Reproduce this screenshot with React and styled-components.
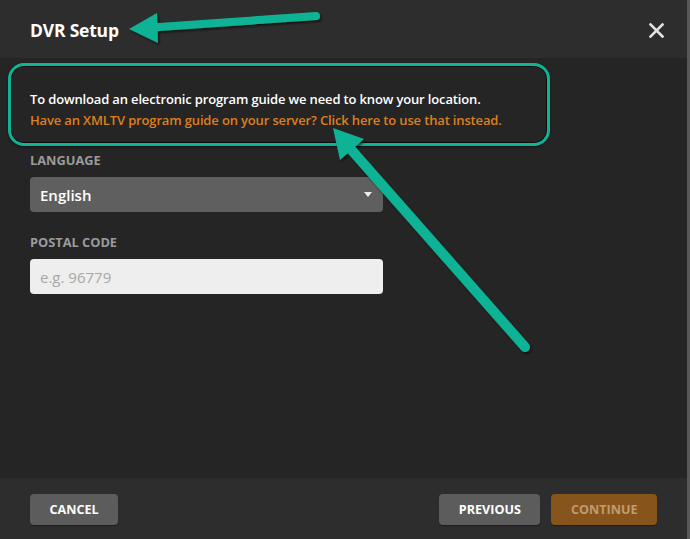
import React from "react";
import styled, { createGlobalStyle } from "styled-components";

const Global = createGlobalStyle`
  html, body {
    margin: 0;
    padding: 0;
    background: #252525;
  }
  body {
    font-family: "Open Sans", "Liberation Sans", sans-serif;
  }
  * { box-sizing: border-box; }
`;

export default function App() {
  return (
    <>
      <Global />
      <Page>
        <Modal>
          <Header>
            <Title>DVR Setup</Title>
            <CloseButton aria-label="close">
              <svg width="15" height="15" viewBox="0 0 15 15">
                <path d="M1.5 1.5 L13.5 13.5 M13.5 1.5 L1.5 13.5" stroke="#e2e2e2" strokeWidth="2.6" strokeLinecap="square" />
              </svg>
            </CloseButton>
          </Header>

          <Body>
            <Intro>
              <p>To download an electronic program guide we need to know your location.</p>
              <a>Have an XMLTV program guide on your server? Click here to use that instead.</a>
            </Intro>

            <Field>
              <Label>Language</Label>
              <Select>
                <span>English</span>
                <Caret />
              </Select>
            </Field>

            <Field>
              <Label>Postal Code</Label>
              <Input placeholder="e.g. 96779" />
            </Field>
          </Body>

          <Footer>
            <Button>Cancel</Button>
            <FooterRight>
              <Button>Previous</Button>
              <Button $primary>Continue</Button>
            </FooterRight>
          </Footer>

          <Highlight />
          <Arrows width="690" height="539" viewBox="0 0 690 539">
            <defs>
              <filter id="sh" x="-10%" y="-10%" width="130%" height="130%">
                <feDropShadow dx="1.5" dy="2" stdDeviation="1.2" floodColor="#000" floodOpacity="0.55" />
              </filter>
            </defs>
            <g filter="url(#sh)" fill="#10b394" stroke="#10b394">
              <line x1="152" y1="27.5" x2="316" y2="16" strokeWidth="8" strokeLinecap="round" />
              <polygon points="129,29 157,13 158,43" stroke="none" />
              <line x1="348" y1="146" x2="525" y2="347" strokeWidth="10" strokeLinecap="round" />
              <polygon points="333,128 340,160 364,139" stroke="none" />
            </g>
          </Arrows>
        </Modal>
        <Strip />
      </Page>
    </>
  );
}

const Page = styled.div`
  display: flex;
  width: 690px;
  height: 539px;
  overflow: hidden;
`;

const Modal = styled.div`
  position: relative;
  width: 687px;
  height: 539px;
  display: flex;
  flex-direction: column;
  background: #252525;
`;

const Strip = styled.div`
  width: 3px;
  background: #585858;
`;

const Header = styled.header`
  height: 58px;
  flex: none;
  display: flex;
  align-items: center;
  justify-content: space-between;
  padding: 2px 23px 0 30px;
  background: #2d2d2d;
`;

const Title = styled.h1`
  margin: 0;
  font-size: 17.5px;
  font-weight: 700;
  color: #fff;
  letter-spacing: -0.2px;
`;

const CloseButton = styled.button`
  background: none;
  border: none;
  padding: 0;
  display: flex;
  cursor: pointer;
`;

const Body = styled.main`
  flex: 1;
  padding: 31px 30px 0 30px;
`;

const Intro = styled.div`
  font-size: 13px;
  line-height: 21px;
  margin-bottom: 21px;

  p {
    margin: 0;
    color: #fff;
    font-weight: 600;
    letter-spacing: -0.15px;
  }

  a {
    color: #dd7f1e;
    font-weight: 600;
    letter-spacing: -0.15px;
    cursor: pointer;
  }
`;

const Field = styled.div`
  width: 353px;
  margin-bottom: 22px;
`;

const Label = styled.div`
  font-size: 12.8px;
  line-height: 17px;
  font-weight: 700;
  text-transform: uppercase;
  color: #9b9b9b;
  margin-top: 1px;
  margin-bottom: 8px;
`;

const Select = styled.div`
  height: 35px;
  display: flex;
  align-items: center;
  justify-content: space-between;
  padding: 0 10px 0 10px;
  background: #5f5f5f;
  border-radius: 4px;
  color: #fff;
  font-size: 15px;
  font-weight: 600;
`;

const Caret = styled.span`
  width: 0;
  height: 0;
  border-left: 4px solid transparent;
  border-right: 4px solid transparent;
  border-top: 5px solid #eee;
  margin-right: 1px;
`;

const Input = styled.input`
  display: block;
  width: 100%;
  height: 35px;
  padding: 0 10px;
  border: none;
  border-radius: 4px;
  background: #eeeeee;
  font-family: inherit;
  font-size: 15px;
  color: #333;
  outline: none;

  &::placeholder {
    color: #a8a8a8;
  }
`;

const Footer = styled.footer`
  height: 61px;
  flex: none;
  display: flex;
  justify-content: space-between;
  align-items: flex-start;
  padding: 16px 30px 0 30px;
  background: #2d2d2d;
`;

const FooterRight = styled.div`
  display: flex;
  gap: 11px;
`;

const Button = styled.button`
  height: 31px;
  padding: 0 19.5px;
  border: none;
  border-radius: 4px;
  font-family: inherit;
  font-size: 12.6px;
  font-weight: 700;
  text-transform: uppercase;
  cursor: pointer;
  background: ${(p) => (p.$primary ? "#87541c" : "#5c5c5c")};
  color: ${(p) => (p.$primary ? "#c29b6f" : "#fff")};
  box-shadow: 0 1px 1px rgba(0, 0, 0, 0.35);
`;

const Highlight = styled.div`
  position: absolute;
  left: 8px;
  top: 63px;
  width: 542px;
  height: 83px;
  border: 3px solid #10b394;
  border-radius: 16px;
  box-shadow: inset 0 0 0 1px rgba(0, 0, 0, 0.6), 0 1px 2px rgba(0, 0, 0, 0.6);
  pointer-events: none;
`;

const Arrows = styled.svg`
  position: absolute;
  left: 0;
  top: 0;
  pointer-events: none;
`;
